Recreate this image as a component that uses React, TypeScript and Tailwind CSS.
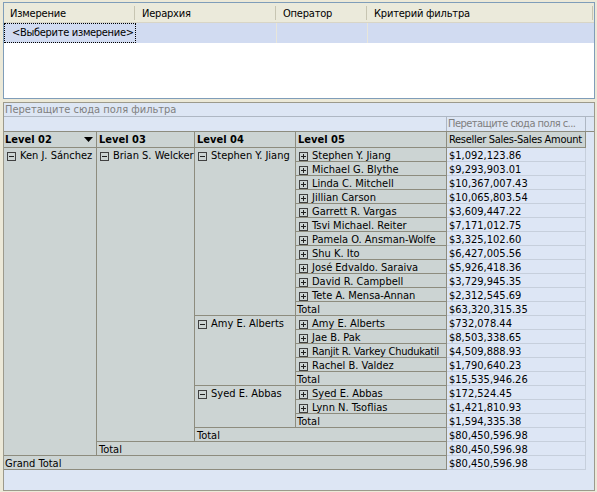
import React from 'react'

const listColumns = [
  { title: 'Измерение', width: 'w-[132px]' },
  { title: 'Иерархия', width: 'w-[141px]' },
  { title: 'Оператор', width: 'w-[91px]' },
  { title: 'Критерий фильтра', width: 'flex-1' },
]

type Cell = { text: string; kind: 'minus' | 'plus' | 'none'; cls: string }

const pivotRows: { head: Cell[]; value: string }[] = [
  {
    head: [
      { text: 'Ken J. Sánchez', kind: 'minus', cls: 'row-span-22' },
      { text: 'Brian S. Welcker', kind: 'minus', cls: 'row-span-21' },
      { text: 'Stephen Y. Jiang', kind: 'minus', cls: 'row-span-12' },
      { text: 'Stephen Y. Jiang', kind: 'plus', cls: '' },
    ],
    value: '$1,092,123.86',
  },
  { head: [{ text: 'Michael G. Blythe', kind: 'plus', cls: '' }], value: '$9,293,903.01' },
  { head: [{ text: 'Linda C. Mitchell', kind: 'plus', cls: '' }], value: '$10,367,007.43' },
  { head: [{ text: 'Jillian Carson', kind: 'plus', cls: '' }], value: '$10,065,803.54' },
  { head: [{ text: 'Garrett R. Vargas', kind: 'plus', cls: '' }], value: '$3,609,447.22' },
  { head: [{ text: 'Tsvi Michael. Reiter', kind: 'plus', cls: '' }], value: '$7,171,012.75' },
  { head: [{ text: 'Pamela O. Ansman-Wolfe', kind: 'plus', cls: '' }], value: '$3,325,102.60' },
  { head: [{ text: 'Shu K. Ito', kind: 'plus', cls: '' }], value: '$6,427,005.56' },
  { head: [{ text: 'José Edvaldo. Saraiva', kind: 'plus', cls: '' }], value: '$5,926,418.36' },
  { head: [{ text: 'David R. Campbell', kind: 'plus', cls: '' }], value: '$3,729,945.35' },
  { head: [{ text: 'Tete A. Mensa-Annan', kind: 'plus', cls: '' }], value: '$2,312,545.69' },
  { head: [{ text: 'Total', kind: 'none', cls: '' }], value: '$63,320,315.35' },
  {
    head: [
      { text: 'Amy E. Alberts', kind: 'minus', cls: 'row-span-5' },
      { text: 'Amy E. Alberts', kind: 'plus', cls: '' },
    ],
    value: '$732,078.44',
  },
  { head: [{ text: 'Jae B. Pak', kind: 'plus', cls: '' }], value: '$8,503,338.65' },
  { head: [{ text: 'Ranjit R. Varkey Chudukatil', kind: 'plus', cls: 'tracking-[-0.25px]' }], value: '$4,509,888.93' },
  { head: [{ text: 'Rachel B. Valdez', kind: 'plus', cls: '' }], value: '$1,790,640.23' },
  { head: [{ text: 'Total', kind: 'none', cls: '' }], value: '$15,535,946.26' },
  {
    head: [
      { text: 'Syed E. Abbas', kind: 'minus', cls: 'row-span-3' },
      { text: 'Syed E. Abbas', kind: 'plus', cls: '' },
    ],
    value: '$172,524.45',
  },
  { head: [{ text: 'Lynn N. Tsoflias', kind: 'plus', cls: '' }], value: '$1,421,810.93' },
  { head: [{ text: 'Total', kind: 'none', cls: '' }], value: '$1,594,335.38' },
  { head: [{ text: 'Total', kind: 'none', cls: 'col-span-2 pl-[2px]' }], value: '$80,450,596.98' },
  { head: [{ text: 'Total', kind: 'none', cls: 'col-span-3 pl-[2px]' }], value: '$80,450,596.98' },
  { head: [{ text: 'Grand Total', kind: 'none', cls: 'col-span-4' }], value: '$80,450,596.98' },
]

function Toggle({ open }: { open: boolean }) {
  return (
    <svg width="9" height="9" viewBox="0 0 9 9" className="mt-[4px] shrink-0">
      <rect x="0.5" y="0.5" width="8" height="8" fill="none" stroke="#404040" />
      <path d="M2 4.5h5" stroke="#202020" />
      {!open && <path d="M4.5 2v5" stroke="#202020" />}
    </svg>
  )
}

function HeadCell({ cell }: { cell: Cell }) {
  return (
    <div
      className={`flex items-start gap-[4px] overflow-hidden whitespace-nowrap border-r border-b border-[#8d8c7e] bg-[#ccd4d3] ${
        cell.kind === 'none' ? 'pl-[1px]' : 'pl-[3px]'
      } ${cell.cls}`}
    >
      {cell.kind !== 'none' && <Toggle open={cell.kind === 'minus'} />}
      <span className="pt-[1px]">{cell.text}</span>
    </div>
  )
}

export default function App() {
  return (
    <div className="relative h-[492px] w-[597px] overflow-hidden bg-[#ece9d8] pt-[2px] pl-[3px] font-['DejaVu_Sans_Condensed','Liberation_Sans',sans-serif] text-[11px] leading-[14px] text-black">
      {/* filter list */}
      <div className="flex h-[97px] w-[592px] flex-col border border-[#7f9db9] bg-white">
        <div className="flex h-[20px] border-b border-[#d8d5c6] bg-[#ebeadb]">
          {listColumns.map((c) => (
            <div key={c.title} className={`flex items-center ${c.width}`}>
              <span className="flex-1 pl-[6px] pt-[2px] leading-[18px] tracking-[-0.2px]">{c.title}</span>
              <span className="mr-[1px] h-[14px] w-[1px] bg-[#c7c5b2]" />
            </div>
          ))}
        </div>
        <div className="flex h-[20px] bg-[#d1dbf1]">
          <div className="flex w-[132px] items-center whitespace-nowrap border border-dotted border-black pl-[7px] tracking-[-0.3px]">
            &lt;Выберите измерение&gt;
          </div>
          <div className="w-[141px] border-r border-[#e8e6d9]" />
          <div className="w-[91px] border-r border-[#e8e6d9]" />
          <div className="flex-1" />
        </div>
      </div>

      {/* pivot table */}
      <div className="mt-[3px] flex h-[389px] w-[592px] flex-col border border-[#9c9a8c] bg-[#dde6f4]">
        <div className="h-[14px] border-b border-[#aeb7c3] pl-[1px] text-[#808080]">Перетащите сюда поля фильтра</div>
        <div className="flex h-[14px]">
          <div className="w-[442px]" />
          <div className="w-[140px] overflow-hidden whitespace-nowrap border-x border-[#aeb7c3] pl-[1px] tracking-[-0.55px] text-[#808080]">
            Перетащите сюда поля с...
          </div>
        </div>
        <div className="grid h-[17px] grid-cols-[93px_98px_101px_151px_139px] border-t border-[#8d8c7e]">
          <div className="flex items-center border-r border-b border-[#8d8c7e] bg-[#ccd4d3] pl-[1px] font-bold">
            <span className="flex-1">Level 02</span>
            <svg width="9" height="5" viewBox="0 0 9 5" className="mr-[3px]">
              <path d="M0 0h9L4.5 5z" fill="#000" />
            </svg>
          </div>
          <div className="flex items-center border-r border-b border-[#8d8c7e] bg-[#ccd4d3] pl-[2px] font-bold">Level 03</div>
          <div className="flex items-center border-r border-b border-[#8d8c7e] bg-[#ccd4d3] pl-[2px] font-bold">Level 04</div>
          <div className="flex items-center border-r border-b border-[#8d8c7e] bg-[#ccd4d3] pl-[2px] font-bold">Level 05</div>
          <div className="flex items-center overflow-hidden whitespace-nowrap border-r border-b border-[#8d8c7e] bg-[#ccd4d3] pl-[2px] tracking-[-0.3px]">
            Reseller Sales-Sales Amount
          </div>
        </div>
        <div className="grid grid-cols-[93px_98px_101px_151px_139px] grid-rows-[repeat(23,14px)]">
          {pivotRows.map((r, i) => (
            <React.Fragment key={i}>
              {r.head.map((c, j) => (
                <HeadCell key={j} cell={c} />
              ))}
              <div className="border-r border-b border-[#c6cfdc] bg-[#dde6f5] pl-[2px] pt-[1px]">{r.value}</div>
            </React.Fragment>
          ))}
        </div>
      </div>
    </div>
  )
}
